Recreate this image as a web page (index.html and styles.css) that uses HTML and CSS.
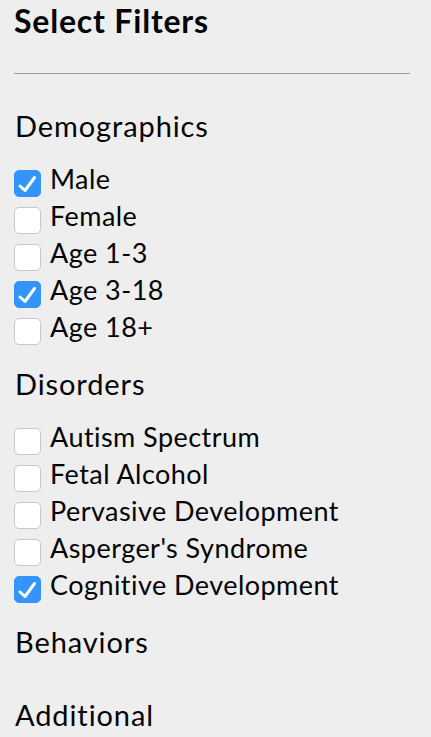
FILE: index.html
```html
<!DOCTYPE html>
<html>
<head>
<meta charset="utf-8">
<link rel="stylesheet" href="styles.css">
</head>
<body>
<div class="panel">
  <h1 class="title">Select Filters</h1>
  <hr class="rule">
  <section class="group">
    <h2 class="group-title">Demographics</h2>
    <ul class="options">
      <li class="option"><span class="box checked"><svg viewBox="0 0 27 27"><path d="M6 16 L11 20.5 L20.5 7.5"/></svg></span>Male</li>
      <li class="option"><span class="box"></span>Female</li>
      <li class="option"><span class="box"></span>Age 1-3</li>
      <li class="option"><span class="box checked"><svg viewBox="0 0 27 27"><path d="M6 16 L11 20.5 L20.5 7.5"/></svg></span>Age 3-18</li>
      <li class="option"><span class="box"></span>Age 18+</li>
    </ul>
  </section>
  <section class="group">
    <h2 class="group-title">Disorders</h2>
    <ul class="options">
      <li class="option"><span class="box"></span>Autism Spectrum</li>
      <li class="option"><span class="box"></span>Fetal Alcohol</li>
      <li class="option"><span class="box"></span>Pervasive Development</li>
      <li class="option"><span class="box"></span>Asperger's Syndrome</li>
      <li class="option"><span class="box checked"><svg viewBox="0 0 27 27"><path d="M6 16 L11 20.5 L20.5 7.5"/></svg></span>Cognitive Development</li>
    </ul>
  </section>
  <section class="group">
    <h2 class="group-title">Behaviors</h2>
    <ul class="options"></ul>
  </section>
  <section class="group">
    <h2 class="group-title">Additional</h2>
    <ul class="options"></ul>
  </section>
</div>
</body>
</html>
```
FILE: styles.css
```css
html, body {
  margin: 0;
  padding: 0;
  background: #eeeeee;
}
body {
  font-family: Lato, "Open Sans", sans-serif;
  color: #050505;
}
.panel {
  display: flex;
  flex-direction: column;
  padding: 2px 21px 0 14px;
}
.title {
  margin: 0;
  font-size: 32px;
  font-weight: 700;
  letter-spacing: 0.8px;
  line-height: 38px;
}
.rule {
  width: 100%;
  box-sizing: border-box;
  margin: 33px 0 0 0;
  height: 0;
  border-style: solid;
  border-width: 1px 0 0 1px;
  border-color: #9a9a9a;
}
.group {
  display: flex;
  flex-direction: column;
  margin-top: 22px;
}
.rule + .group {
  margin-top: 35px;
}
.group-title {
  margin: 0;
  font-size: 29px;
  font-weight: 400;
  letter-spacing: 0.9px;
  line-height: 34px;
  padding-left: 1px;
}
.options {
  list-style: none;
  margin: 17px 0 0 0;
  padding: 0;
}
.option {
  display: flex;
  align-items: flex-start;
  gap: 9px;
  height: 37px;
  font-size: 27px;
  line-height: 37px;
  letter-spacing: 0.45px;
}
.box {
  flex: none;
  margin-top: 10px;
  width: 27px;
  height: 27px;
  box-sizing: border-box;
  border: 1px solid #c8c8c8;
  border-radius: 5px;
  background: #fff;
  position: relative;
}
.box.checked {
  background: #3395f9;
  border-color: #3395f9;
}
.box svg {
  position: absolute;
  left: -1px;
  top: -1px;
  width: 27px;
  height: 27px;
}
.box svg path {
  fill: none;
  stroke: #fff;
  stroke-width: 3;
  stroke-linecap: round;
  stroke-linejoin: round;
}
```
